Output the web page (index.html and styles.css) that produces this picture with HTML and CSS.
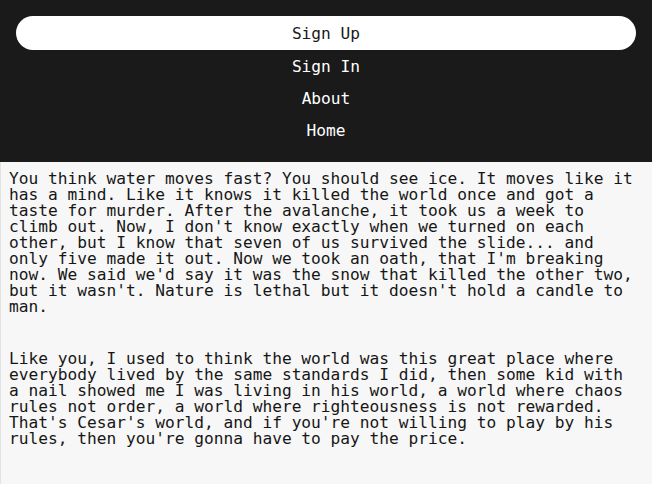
FILE: index.html
```html
<!DOCTYPE html>
<html lang="en">
<head>
<meta charset="utf-8">
<title>Story</title>
<link rel="stylesheet" href="styles.css">
</head>
<body>
<header class="site-header">
  <nav class="nav">
    <a class="nav-link nav-link--primary" href="#">Sign Up</a>
    <a class="nav-link" href="#">Sign In</a>
    <a class="nav-link" href="#">About</a>
    <a class="nav-link" href="#">Home</a>
  </nav>
</header>
<main class="content">
  <p class="para">You think water moves fast? You should see ice. It moves like it has a mind. Like it knows it killed the world once and got a taste for murder. After the avalanche, it took us a week to climb out. Now, I don't know exactly when we turned on each other, but I know that seven of us survived the slide... and only five made it out. Now we took an oath, that I'm breaking now. We said we'd say it was the snow that killed the other two, but it wasn't. Nature is lethal but it doesn't hold a candle to man.</p>
  <p class="para">Like you, I used to think the world was this great place where everybody lived by the same standards I did, then some kid with a nail showed me I was living in his world, a world where chaos rules not order, a world where righteousness is not rewarded. That's Cesar's world, and if you're not willing to play by his rules, then you're gonna have to pay the price.</p>
</main>
</body>
</html>
```
FILE: styles.css
```css
html, body {
  margin: 0;
  padding: 0;
  height: 100%;
}
body {
  background: #f7f7f7;
  font-family: "DejaVu Sans Mono", "Liberation Mono", monospace;
  font-size: 16.2px;
  color: #161616;
  display: flex;
  flex-direction: column;
}
.site-header {
  background: #1a1a1a;
  padding: 16px 16px;
}
.nav {
  display: flex;
  flex-direction: column;
  align-items: stretch;
}
.nav-link {
  box-sizing: border-box;
  display: block;
  text-align: center;
  color: #ffffff;
  text-decoration: none;
  height: 32px;
  padding-top: 2px;
  line-height: 30px;
}
.nav-link--primary {
  background: #ffffff;
  color: #1a1a1a;
  border-radius: 17px;
  height: 34px;
  line-height: 32px;
}
.content {
  flex: 1;
  border-left: 1px solid #e3e3e3;
  padding: 9px 14px 8px 8px;
}
.para {
  margin: 0 0 36px 0;
  line-height: 16px;
}
```
